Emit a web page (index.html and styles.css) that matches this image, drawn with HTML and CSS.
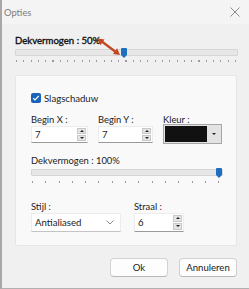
FILE: index.html
```html
<!DOCTYPE html>
<html>

<head>
    <meta charset="UTF-8">
    <title>Opties</title>
    <link rel="stylesheet" href="styles.css">
</head>

<body>
    <div class="window">
        <div class="titlebar">
            <span class="title">Opties</span>
            <svg class="close" width="10" height="10" viewBox="0 0 10 10">
                <path d="M0.5 0.5 L9.5 9.5 M9.5 0.5 L0.5 9.5" stroke="#8c8c8c" stroke-width="1" fill="none" />
            </svg>
        </div>
        <div class="content">
            <div class="caption strong">Dekvermogen : 50%</div>
            <div class="slider wide">
                <div class="track"><span class="thumb" style="left: 49%"></span></div>
                <div class="ticks"></div>
            </div>

            <div class="panel">
                <label class="check">
                    <span class="box">
                        <svg width="8" height="8" viewBox="0 0 8 8">
                            <path d="M1.2 4.2 L3.1 6 L6.8 1.9" stroke="#fff" stroke-width="1.2" fill="none" />
                        </svg>
                    </span>
                    Slagschaduw
                </label>

                <div class="row coords">
                    <div class="col">
                        <div class="caption">Begin X :</div>
                        <div class="spin">
                            <span class="val">7</span>
                            <span class="arrows"><i class="up"></i><i class="down"></i></span>
                        </div>
                    </div>
                    <div class="col">
                        <div class="caption">Begin Y :</div>
                        <div class="spin">
                            <span class="val">7</span>
                            <span class="arrows"><i class="up"></i><i class="down"></i></span>
                        </div>
                    </div>
                    <div class="col">
                        <div class="caption">Kleur :</div>
                        <div class="colour">
                            <span class="swatch"></span>
                            <span class="drop"></span>
                        </div>
                    </div>
                </div>

                <div class="caption op2">Dekvermogen : 100%</div>
                <div class="slider narrow">
                    <div class="track"><span class="thumb" style="left: 100%"></span></div>
                    <div class="ticks"></div>
                </div>

                <div class="row style">
                    <div class="col">
                        <div class="caption">Stijl :</div>
                        <div class="select">
                            <span class="val">Antialiased</span>
                            <svg width="8" height="5" viewBox="0 0 8 5">
                                <path d="M0.5 0.5 L4 4 L7.5 0.5" stroke="#8a8a8a" stroke-width="1" fill="none" />
                            </svg>
                        </div>
                    </div>
                    <div class="col">
                        <div class="caption">Straal :</div>
                        <div class="spin short">
                            <span class="val">6</span>
                            <span class="arrows"><i class="up"></i><i class="down"></i></span>
                        </div>
                    </div>
                </div>
            </div>

            <div class="buttons">
                <button class="btn">Ok</button>
                <button class="btn">Annuleren</button>
            </div>
        </div>

        <svg class="arrow" width="24" height="18" viewBox="0 0 24 18">
            <path d="M3.5 2.5 L19.5 14.5" stroke="#c2461f" stroke-width="2.2" fill="none" />
            <path d="M0.5 0.5 L7.5 1.6 L3.4 7.2 Z" fill="#c2461f" />
            <path d="M23 17 L16 15.9 L20.1 10.3 Z" fill="#c2461f" />
        </svg>
    </div>
</body>

</html>
```

FILE: styles.css
```css
html,
body {
    margin: 0;
    padding: 0;
}

body {
    width: 249px;
    height: 289px;
    overflow: hidden;
    font-family: Lato, "Noto Sans", sans-serif;
    font-size: 9.4px;
    color: #1c1c1c;
}

.window {
    position: relative;
    width: 249px;
    height: 289px;
    box-sizing: border-box;
    background-color: #f0f0f0;
    border-left: 2px solid #a8a8a8;
    border-bottom: 1px solid #b0b0b0;
}

.titlebar {
    height: 24px;
    display: flex;
    align-items: center;
    justify-content: space-between;
    padding: 0 9px 0 2px;
    background-color: #f4f4f4;
}

.title {
    color: #7c7c7c;
    font-size: 9.4px;
}

.content {
    padding: 10px 10px 0 13px;
}

.caption {
    line-height: 13px;
    height: 13px;
    white-space: nowrap;
}

.caption.strong {
    color: #111;
    font-size: 9.6px;
    -webkit-text-stroke: 0.35px #111;
    line-height: 14px;
    height: 14px;
}

/* sliders */
.slider {
    margin-top: 1px;
}

.slider.wide {
    width: 223px;
}

.slider.narrow {
    width: 192px;
}

.track {
    position: relative;
    height: 5px;
    border: 1px solid #d6d6d6;
    background-color: #e7e7e7;
    border-radius: 1px;
}

.thumb {
    position: absolute;
    top: -2px;
    width: 6px;
    height: 7px;
    margin-left: -3px;
    background-color: #1e6fc0;
    border-radius: 1px 1px 0 0;
}

.thumb::after {
    content: "";
    position: absolute;
    left: 0;
    top: 7px;
    border-left: 3px solid transparent;
    border-right: 3px solid transparent;
    border-top: 3px solid #1e6fc0;
}

.narrow .thumb {
    margin-left: -6px;
}

.ticks {
    height: 2px;
    margin-top: 4px;
}

.wide .ticks {
    background: repeating-linear-gradient(to right, #9a9a9a 0 1px, transparent 1px 7.3px);
    margin-left: 1px;
}

.narrow .ticks {
    margin-top: 5px;
    background: repeating-linear-gradient(to right, #9a9a9a 0 1px, transparent 1px 13.3px);
    margin-left: 1px;
}

/* group panel */
.panel {
    width: 222px;
    box-sizing: border-box;
    margin-top: 13px;
    padding: 16px 0 13px 15px;
    background-color: #f9f9f9;
    border: 1px solid #e6e6e6;
    border-radius: 2px;
}

.check {
    display: flex;
    align-items: center;
    height: 12px;
    font-size: 9.6px;
}

.box {
    display: flex;
    align-items: center;
    justify-content: center;
    width: 10px;
    height: 10px;
    margin-right: 3px;
    background-color: #1a64b8;
    border-radius: 2px;
}

.row {
    display: flex;
}

.coords {
    margin-top: 9px;
    gap: 10px;
}

.coords .col:nth-child(1) {
    width: 57px;
}

.coords .col:nth-child(2) {
    width: 55px;
}

.coords .col:nth-child(3) {
    width: 59px;
}

.spin {
    display: flex;
    align-items: center;
    justify-content: space-between;
    height: 17px;
    box-sizing: border-box;
    padding: 0 1px 0 3px;
    background-color: #fff;
    border: 1px solid #ececec;
    border-bottom: 1px solid #9a9a9a;
    font-size: 9.6px;
}

.spin.short {
    width: 50px;
    height: 19px;
}

.arrows {
    display: flex;
    flex-direction: column;
    gap: 1px;
}

.arrows i {
    display: block;
    width: 9px;
    height: 6px;
    box-sizing: border-box;
    background-color: #e4e4e4;
    border: 1px solid #c8c8c8;
    position: relative;
}

.short .arrows i {
    height: 7px;
}

.arrows i::after {
    content: "";
    position: absolute;
    left: 2px;
    border-left: 2px solid transparent;
    border-right: 2px solid transparent;
}

.arrows .up::after {
    top: 1px;
    border-bottom: 2px solid #222;
}

.arrows .down::after {
    top: 1px;
    border-top: 2px solid #222;
}

.colour {
    display: flex;
    align-items: center;
    height: 20px;
    margin-top: -2px;
    box-sizing: border-box;
    padding: 1px;
    background-color: #e3e3e3;
    border: 1px solid #a6a6a6;
}

.swatch {
    width: 42px;
    height: 100%;
    background-color: #111;
}

.drop {
    flex: 1;
    display: flex;
    justify-content: center;
}

.drop::after {
    content: "";
    border-left: 2px solid transparent;
    border-right: 2px solid transparent;
    border-top: 2px solid #222;
}

.op2 {
    margin-top: 10px;
    height: 14px;
    line-height: 14px;
}

.style {
    margin-top: 17px;
    gap: 13px;
}

.select {
    display: flex;
    align-items: center;
    justify-content: space-between;
    width: 90px;
    height: 19px;
    box-sizing: border-box;
    padding: 0 6px 0 3px;
    background-color: #fff;
    border: 1px solid #ececec;
    border-bottom: 1px solid #c4c4c4;
    font-size: 9.6px;
}

/* dialog buttons */
.buttons {
    display: flex;
    justify-content: flex-end;
    gap: 11px;
    margin-top: 12px;
    width: 222px;
}

.btn {
    width: 58px;
    height: 19px;
    padding: 0;
    font-family: inherit;
    font-size: 9.6px;
    color: #1c1c1c;
    background-color: #fdfdfd;
    border: 1px solid #d2d2d2;
    border-bottom-color: #b8b8b8;
    border-radius: 4px;
}

.arrow {
    position: absolute;
    left: 95px;
    top: 38px;
}
```
